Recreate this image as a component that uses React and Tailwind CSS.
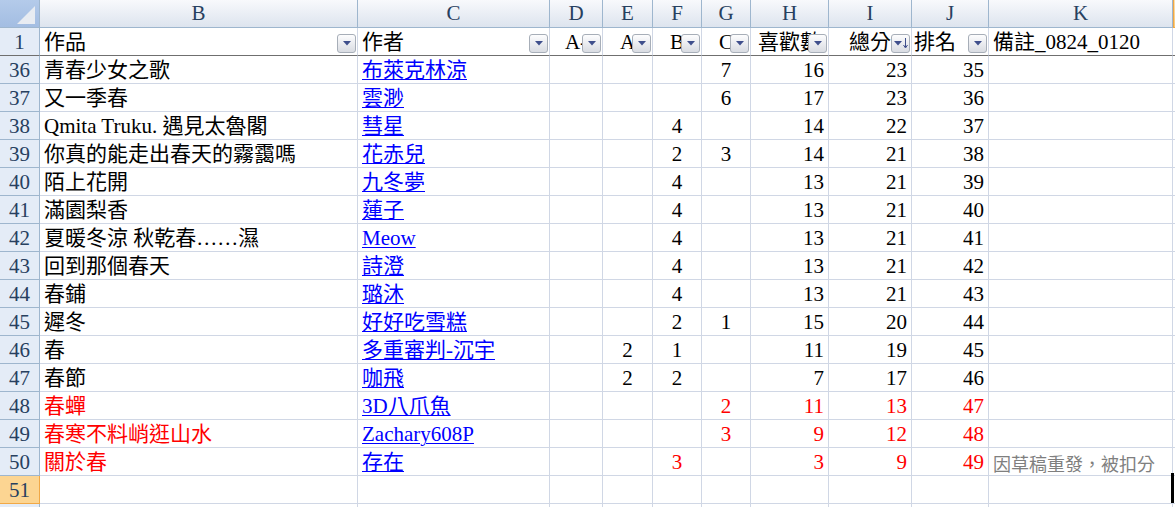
import React from "react";

const cols = "grid-cols-[40px_318px_192px_53px_50px_49px_49px_78px_83px_77px_184px_1fr]";

const letters = ["B", "C", "D", "E", "F", "G", "H", "I", "J", "K"];

// [row, 作品, 作者, D, E, F, G, H, I, J, 備註, red]
const rows = [
  [36, "青春少女之歌", "布萊克林涼", "", "", "", "7", "16", "23", "35", "", false],
  [37, "又一季春", "雲渺", "", "", "", "6", "17", "23", "36", "", false],
  [38, "Qmita Truku. 遇見太魯閣", "彗星", "", "", "4", "", "14", "22", "37", "", false],
  [39, "你真的能走出春天的霧靄嗎", "花赤兒", "", "", "2", "3", "14", "21", "38", "", false],
  [40, "陌上花開", "九冬夢", "", "", "4", "", "13", "21", "39", "", false],
  [41, "滿園梨香", "蓮子", "", "", "4", "", "13", "21", "40", "", false],
  [42, "夏暖冬涼 秋乾春……濕", "Meow", "", "", "4", "", "13", "21", "41", "", false],
  [43, "回到那個春天", "詩澄", "", "", "4", "", "13", "21", "42", "", false],
  [44, "春鋪", "璐沐", "", "", "4", "", "13", "21", "43", "", false],
  [45, "遲冬", "好好吃雪糕", "", "", "2", "1", "15", "20", "44", "", false],
  [46, "春", "多重審判-沉宇", "", "2", "1", "", "11", "19", "45", "", false],
  [47, "春節", "咖飛", "", "2", "2", "", "7", "17", "46", "", false],
  [48, "春蟬", "3D八爪魚", "", "", "", "2", "11", "13", "47", "", true],
  [49, "春寒不料峭逛山水", "Zachary608P", "", "", "", "3", "9", "12", "48", "", true],
  [50, "關於春", "存在", "", "", "3", "", "3", "9", "49", "因草稿重發，被扣分", true],
];

function FilterButton({ sort }) {
  return (
    <span className="absolute right-px bottom-[2px] w-[19px] h-[19px] rounded-[3px] border border-[#a7aeb8] bg-linear-to-b from-[#fdfdfe] to-[#d9dce2] flex items-center justify-center gap-[1px]">
      <svg width="8" height="5" viewBox="0 0 8 5">
        <path d="M0 0h8L4 4.5z" fill="#3f4f8c" />
      </svg>
      {sort && (
        <svg width="5" height="11" viewBox="0 0 5 11">
          <path d="M2.5 0v9M0.5 7l2 3 2-3" stroke="#3f4f8c" strokeWidth="1" fill="none" />
        </svg>
      )}
    </span>
  );
}

function Cell({ children, className = "" }) {
  return (
    <div className={`h-[28px] pt-[3px] border-r border-b border-[#d0d7e5] flex items-center whitespace-nowrap overflow-hidden ${className}`}>
      {children}
    </div>
  );
}

function RowHead({ children, active }) {
  return (
    <div
      className={`h-[28px] pt-[3px] border-r border-b flex items-center justify-center text-[#27405f] ${
        active ? "border-[#f1a846] bg-[#fcd592]" : "border-[#9eb6ce] bg-[#e4ecf7]"
      }`}
    >
      {children}
    </div>
  );
}

export default function App() {
  const head = [
    { t: "作品", a: "justify-start pl-1" },
    { t: "作者", a: "justify-start pl-1" },
    { t: "A-", a: "justify-center" },
    { t: "A", a: "justify-center" },
    { t: "B", a: "justify-center" },
    { t: "C", a: "justify-center" },
    { t: "喜歡數", a: "justify-center" },
    { t: "總分", a: "justify-center", sort: true },
    { t: "排名", a: "justify-start pl-[2px]" },
    { t: "備註_0824_0120", a: "justify-start pl-1", nob: true },
  ];

  return (
    <div className="w-[1175px] h-[507px] overflow-hidden bg-white font-['Liberation_Serif','Noto_Sans_CJK_TC',serif] text-[21px] text-black">
      <div className={`grid ${cols}`}>
        {/* column headers */}
        <div className="h-[28px] border-r border-b border-[#9eb6ce] bg-linear-to-b from-[#b4cbea] to-[#a3bde2] relative">
          <svg className="absolute left-[16px] top-[5px]" width="20" height="20" viewBox="0 0 20 20">
            <path d="M19 1V19H1z" fill="#e8ecf2" />
          </svg>
        </div>
        {letters.map((l) => (
          <div
            key={l}
            className="h-[28px] pt-[1px] border-r border-b border-[#9eb6ce] bg-linear-to-b from-[#f8f9fc] to-[#dde4ee] flex items-center justify-center text-[#27405f]"
          >
            {l}
          </div>
        ))}
        <div className="h-[28px] border-l border-b border-[#f1a846] bg-linear-to-b from-[#fbe1b3] to-[#f8c979]" />

        {/* row 1 */}
        <div className="h-[28px] pt-[3px] border-r border-b border-r-[#9eb6ce] border-b-[#6f6f6f] bg-[#e4ecf7] flex items-center justify-center text-[#27405f]">
          1
        </div>
        {head.map((h, i) => (
          <div
            key={i}
            className={`relative h-[28px] pt-[3px] border-r border-b border-r-[#d0d7e5] border-b-[#6f6f6f] flex items-center whitespace-nowrap overflow-hidden ${h.a}`}
          >
            {h.t}
            {!h.nob && <FilterButton sort={h.sort} />}
          </div>
        ))}
        <div className="h-[28px] border-b border-[#6f6f6f]" />

        {/* data rows */}
        {rows.map((r) => {
          const red = r[11];
          const num = red ? "text-[#ff0000]" : "";
          return (
            <React.Fragment key={r[0]}>
              <RowHead>{r[0]}</RowHead>
              <Cell className={`pl-1 ${num}`}>{r[1]}</Cell>
              <Cell className="pl-1">
                <span className="text-[#0000ff] underline underline-offset-2 decoration-1">{r[2]}</span>
              </Cell>
              <Cell className="justify-center">{r[3]}</Cell>
              <Cell className="justify-center">{r[4]}</Cell>
              <Cell className={`justify-center ${num}`}>{r[5]}</Cell>
              <Cell className={`justify-center ${num}`}>{r[6]}</Cell>
              <Cell className={`justify-end pr-1 ${num}`}>{r[7]}</Cell>
              <Cell className={`justify-end pr-1 ${num}`}>{r[8]}</Cell>
              <Cell className={`justify-end pr-1 ${num}`}>{r[9]}</Cell>
              <Cell className="pl-1 font-['Noto_Sans_CJK_TC',sans-serif] text-[18px] text-[#7f7f7f]">{r[10]}</Cell>
              <div className="h-[28px] border-b border-[#d0d7e5]" />
            </React.Fragment>
          );
        })}

        {/* row 51 (active) */}
        <RowHead active>51</RowHead>
        {letters.map((l) => (
          <Cell key={l} />
        ))}
        <div className="relative h-[28px] border-b border-[#d0d7e5]">
          <span className="absolute left-[-2px] top-[-3px] bottom-0 w-[3px] bg-black" />
        </div>

        {/* row 52 (mostly out of view) */}
        <RowHead />
        {letters.map((l) => (
          <Cell key={l} />
        ))}
        <div className="h-[28px] border-b border-[#d0d7e5]" />
      </div>
    </div>
  );
}
